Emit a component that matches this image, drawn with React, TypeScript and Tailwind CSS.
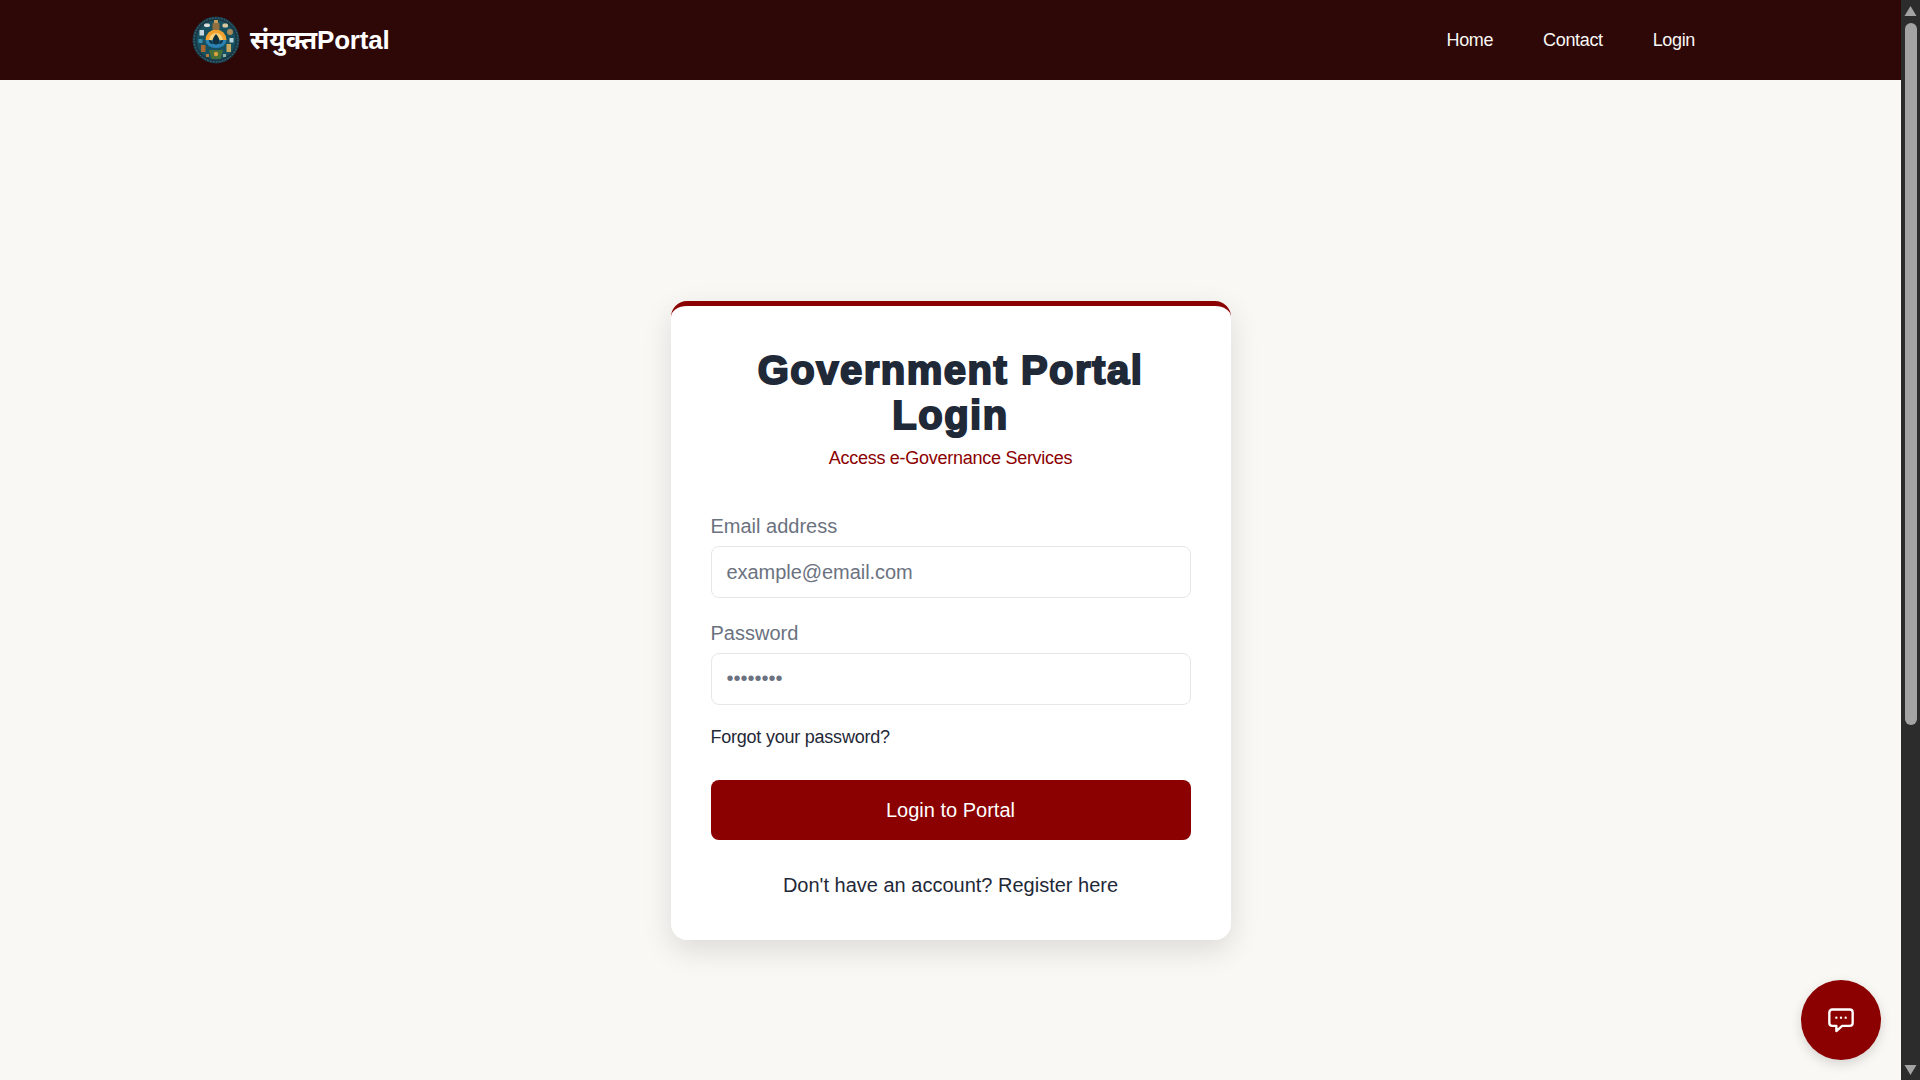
import React from 'react';

const Logo = () => (
  <svg width="48" height="48" viewBox="0 0 48 48" className="shrink-0">
    <circle cx="24" cy="24" r="23.500" fill="#1b3a48" />
    <circle cx="24" cy="24" r="22" fill="none" stroke="#3f7f8c" strokeWidth="1" strokeDasharray="1.500 1.500" />
    <circle cx="24" cy="24" r="19.500" fill="#17505f" />
    {/* sun and lotus */}
    <path d="M13.500 24a10.500 10.500 0 0 1 21 0z" fill="#f2a02e" />
    <path d="M17 24a7 7 0 0 1 14 0z" fill="#f8d27a" />
    <path d="M13.500 24h21a10.500 8 0 0 1-21 0z" fill="#2a83b4" />
    <path d="M24 18c2.500 3 3.500 5 3.500 7a3.500 3.500 0 0 1-7 0c0-2 1-4 3.500-7z" fill="#10303f" />
    <path d="M17 24c2 0 3.500 1.500 4 4-2.500 0-4-1.500-4-4zM31 24c-2 0-3.500 1.500-4 4 2.500 0 4-1.500 4-4z" fill="#10303f" />
    {/* tower on top */}
    <rect x="22" y="4" width="4" height="3" fill="#c49a5a" />
    <rect x="20.500" y="7" width="7" height="7" rx="1" fill="#8f6f3f" />
    {/* small emblems round the ring */}
    <rect x="12" y="7.500" width="6" height="3.500" rx="1.700" fill="#d9dedc" />
    <rect x="30.500" y="7.500" width="5.500" height="4" rx="1.500" fill="#d8c8a0" />
    <rect x="7.500" y="14" width="4.500" height="5.500" fill="#c5d6e0" />
    <circle cx="38" cy="16" r="3" fill="#a98a58" />
    <rect x="6.500" y="23" width="4" height="4" fill="#3d8fae" />
    <rect x="37.500" y="22" width="4" height="4.500" fill="#b8d0d8" />
    <rect x="9" y="29" width="4.500" height="7" fill="#a8662f" />
    <rect x="34.500" y="28" width="4.500" height="8" fill="#c9a85f" />
    {/* base */}
    <path d="M17 34h14l-2.500 9h-9z" fill="#476f3a" />
    <circle cx="24" cy="38" r="2.200" fill="#d8a040" />
    <rect x="14" y="38" width="3" height="3" fill="#b5793a" />
    <rect x="31" y="38" width="3" height="3" fill="#8fb0a0" />
  </svg>
);

const ChatIcon = () => (
  <svg width="28" height="28" viewBox="0 0 24 24" fill="none" stroke="white" strokeWidth="2" strokeLinejoin="round" strokeLinecap="round">
    <path d="M4.500 3h15A2.500 2.500 0 0 1 22 5.500v9a2.500 2.500 0 0 1-2.500 2.500H13l-5 4.500V17H4.500A2.500 2.500 0 0 1 2 14.500v-9A2.500 2.500 0 0 1 4.500 3z" />
    <path d="M8 10h.01M12 10h.01M16 10h.01" />
  </svg>
);

const Scrollbar = () => (
  <div className="w-[19px] h-screen shrink-0 bg-[#2c2c2c] flex flex-col items-center">
    <svg width="19" height="23" viewBox="0 0 19 23"><path d="M9.500 6l6 10h-12z" fill="#a3a3a3" /></svg>
    <div className="w-[12px] h-[702px] rounded-full bg-[#a3a3a3]"></div>
    <div className="flex-1"></div>
    <svg width="19" height="19" viewBox="0 0 19 19"><path d="M3.500 4h12l-6 10z" fill="#a3a3a3" /></svg>
  </div>
);

export default function App() {
  return (
    <div className="flex h-screen overflow-hidden font-['Liberation_Sans',Arial,sans-serif]">
      <div className="relative flex-1 flex flex-col bg-[#faf8f5]">
        <header className="h-[80px] shrink-0 bg-[#2e0707] flex items-center justify-between pl-[192px] pr-[206px]">
          <a className="flex items-center gap-[10px] text-white text-[26px] font-bold">
            <Logo />
            <span className="font-['Noto_Sans','Liberation_Sans',sans-serif]">संयुक्त<span className="font-['Liberation_Sans',sans-serif] tracking-[-0.2px]">Portal</span></span>
          </a>
          <nav className="flex items-center gap-[50px] text-[18px] text-[#f9f7f4] tracking-[-0.35px]">
            <a>Home</a>
            <a>Contact</a>
            <a>Login</a>
          </nav>
        </header>

        <main className="flex-1 flex items-center justify-center">
          <div className="w-[560px] bg-white rounded-[16px] border-t-[5px] border-[#8b0000] shadow-[0_10px_30px_rgba(0,0,0,0.12)] px-10 pt-[42px] pb-10 mt-[80px]">
            <h1 className="text-[40px] leading-[45px] font-bold text-center text-[#1f2937] [-webkit-text-stroke:2px_#1f2937] tracking-[1.5px]">
              Government Portal Login
            </h1>
            <p className="mt-[7px] text-center text-[18px] tracking-[-0.27px] text-[#8b0000]">Access e-Governance Services</p>

            <form className="mt-[40px]">
              <label className="block text-[20px] leading-[28px] text-[#6b7280] mb-[6px]">Email address</label>
              <input
                className="block w-full h-[52px] px-[15px] pt-[2px] border border-[#e5e7eb] rounded-[8px] text-[20px] tracking-[-0.05px] placeholder:text-[#6b7280] outline-none"
                placeholder="example@email.com"
                readOnly
              />
              <label className="block mt-[21px] text-[20px] leading-[28px] text-[#6b7280] mb-[6px]">Password</label>
              <input
                type="password"
                className="block w-full h-[52px] px-[15px] border border-[#e5e7eb] rounded-[8px] text-[20px] text-[#6b7280] outline-none"
                defaultValue="password"
                readOnly
              />
              <a className="block mt-[19px] text-[18px] leading-[26px] tracking-[-0.23px] text-[#1f2937]">Forgot your password?</a>
              <button type="button" className="block w-full h-[60px] mt-[30px] rounded-[8px] bg-[#8b0000] text-white text-[20px]">
                Login to Portal
              </button>
              <p className="mt-[30px] text-center text-[20px] leading-[30px] text-[#1f2937]">Don't have an account? Register here</p>
            </form>
          </div>
        </main>

        <button className="absolute right-[20px] bottom-[20px] w-[80px] h-[80px] rounded-full bg-[#8b0000] flex items-center justify-center shadow-[0_4px_12px_rgba(0,0,0,0.15)]">
          <ChatIcon />
        </button>
      </div>
      <Scrollbar />
    </div>
  );
}
